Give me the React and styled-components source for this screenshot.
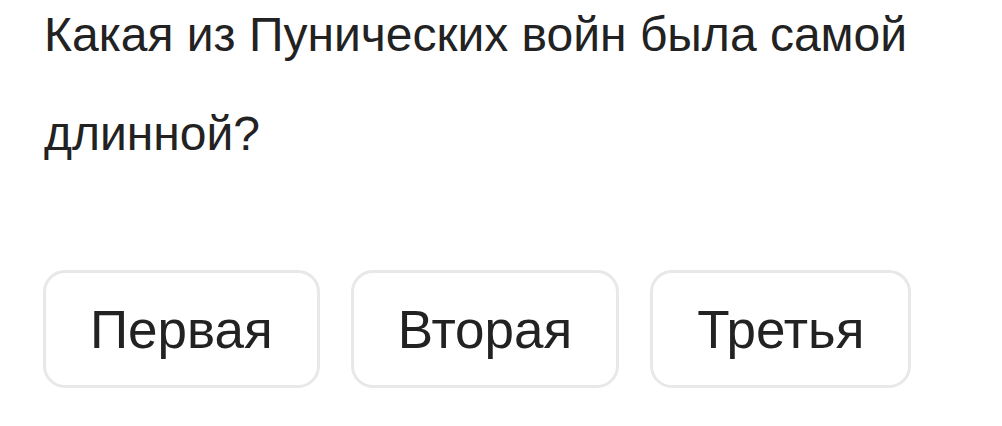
import styled, { createGlobalStyle } from "styled-components";

const GlobalStyle = createGlobalStyle`
  html, body {
    margin: 0;
    padding: 0;
    background: #fff;
  }
  body {
    font-family: "Liberation Sans", Arial, sans-serif;
    color: #222;
  }
`;

const Card = styled.div`
  width: 1002px;
  height: 426px;
  overflow: hidden;
  padding: 0 44px;
  box-sizing: border-box;
`;

const Question = styled.h2`
  margin: -15px 0 0;
  font-size: 48px;
  font-weight: 400;
  line-height: 99px;
  color: #222;
`;

const Options = styled.div`
  display: flex;
  gap: 31px;
  margin-top: 87px;
  margin-left: -1px;
`;

const Option = styled.button`
  display: flex;
  align-items: center;
  justify-content: center;
  height: 118px;
  padding: 0 44px;
  box-sizing: border-box;
  background: #fff;
  border: 3px solid #e8e8e8;
  border-radius: 22px;
  font-family: inherit;
  font-size: 53px;
  color: #222;
  cursor: pointer;
`;

const answers = ["Первая", "Вторая", "Третья"];

export default function App() {
  return (
    <>
      <GlobalStyle />
      <Card>
        <Question>Какая из Пунических войн была самой длинной?</Question>
        <Options>
          {answers.map((a) => (
            <Option key={a}>{a}</Option>
          ))}
        </Options>
      </Card>
    </>
  );
}
